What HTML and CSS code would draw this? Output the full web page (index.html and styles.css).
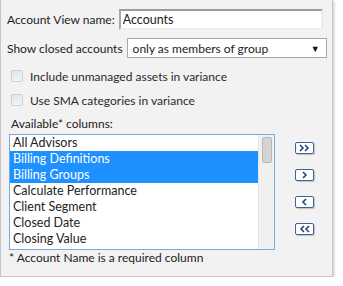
FILE: index.html
```html
<!DOCTYPE html>
<html lang="en">
  <head>
    <meta charset="UTF-8" />
    <title>Account View</title>
    <link rel="stylesheet" href="styles.css">
  </head>
  <body>
    <div class="panel">
      <div class="row name-row">
        <label for="view-name">Account View name:</label>
        <input id="view-name" class="text-input" type="text" value="Accounts" />
      </div>
      <div class="row closed-row">
        <label>Show closed accounts</label>
        <div class="select">
          <span>only as members of group</span>
          <span class="arrow">&#9660;</span>
        </div>
      </div>
      <div class="check"><span class="box"></span>Include unmanaged assets in variance</div>
      <div class="check"><span class="box"></span>Use SMA categories in variance</div>
      <div class="cols-label">Available* columns:</div>
      <div class="columns">
        <div class="list">
          <ul class="items">
            <li>All Advisors</li>
            <li class="selected">Billing Definitions</li>
            <li class="selected">Billing Groups</li>
            <li>Calculate Performance</li>
            <li>Client Segment</li>
            <li>Closed Date</li>
            <li>Closing Value</li>
          </ul>
          <div class="scrollbar"><div class="thumb"></div></div>
        </div>
        <div class="moves">
          <button class="move"><svg width="11" height="8" viewBox="0 0 11 8"><polyline points="1,1 4,4 1,7" /><polyline points="6,1 9,4 6,7" /></svg></button>
          <button class="move"><svg width="11" height="8" viewBox="0 0 11 8"><polyline points="4,1 7,4 4,7" /></svg></button>
          <button class="move"><svg width="11" height="8" viewBox="0 0 11 8"><polyline points="7,1 4,4 7,7" /></svg></button>
          <button class="move"><svg width="11" height="8" viewBox="0 0 11 8"><polyline points="5,1 2,4 5,7" /><polyline points="10,1 7,4 10,7" /></svg></button>
        </div>
      </div>
      <div class="note">* Account Name is a required column</div>
    </div>
  </body>
</html>
```

FILE: styles.css
```css
* {
  box-sizing: border-box;
}

body {
  margin: 0;
  background-color: #fff;
}

.panel {
  width: 333px;
  height: 277px;
  background-color: #f2f2f2;
  border: 1px solid #c6c6c6;
  border-top: none;
  box-shadow: 1px 1px 3px rgba(0, 0, 0, 0.22);
  padding: 9px 0 0 6px;
  font-family: 'Lato', sans-serif;
  font-size: 12px;
  color: #222;
}

.row {
  display: flex;
  align-items: center;
  white-space: nowrap;
}

.row label {
  flex-shrink: 0;
  margin-right: 4px;
}

.name-row {
  height: 21px;
}

.text-input {
  width: 204px;
  height: 21px;
  margin: 0;
  padding: 0 2px;
  font: inherit;
  font-size: 12.5px;
  color: #222;
  background-color: #fff;
  border-style: solid;
  border-width: 2px;
  border-color: #9c9c9c #ececec #ececec #a8a8a8;
  outline: none;
}

.closed-row {
  margin-top: 8px;
  height: 20px;
}

.select {
  display: flex;
  flex-shrink: 0;
  align-items: center;
  justify-content: space-between;
  width: 200px;
  height: 20px;
  padding: 0 6px 0 5px;
  background-color: #fff;
  border: 1px solid #a9a9a9;
}

.arrow {
  font-size: 9px;
  color: #111;
}

.check {
  display: flex;
  align-items: center;
  height: 24px;
  padding-left: 4px;
  color: #2a2a2a;
}

.closed-row + .check {
  margin-top: 6px;
}

.box {
  width: 12px;
  height: 12px;
  margin-right: 7px;
  border: 1px solid #cfcfcf;
  border-radius: 2px;
  background: linear-gradient(#e6e6e6, #f3f3f3);
}

.cols-label {
  margin-top: 4px;
  height: 16px;
  line-height: 16px;
  padding-left: 4px;
}

.columns {
  display: flex;
  margin-top: 2px;
  padding-left: 2px;
}

.list {
  display: flex;
  width: 266px;
  height: 116px;
  background-color: #fff;
  border: 1px solid #7ba7d9;
}

.items {
  flex: 1;
  list-style: none;
  margin: 0;
  padding: 0;
  font-size: 12.5px;
}

.items li {
  height: 16px;
  line-height: 16px;
  padding-left: 3px;
  white-space: nowrap;
}

.items li.selected {
  background-color: #1e90ff;
  color: #fff;
}

.scrollbar {
  width: 16px;
  padding: 2px 2px 0 3px;
  background-color: #f0f0f0;
  border-left: 1px solid #e4e4e4;
}

.thumb {
  height: 26px;
  background-color: #d4d4d4;
  border: 1px solid #b9b9b9;
  border-radius: 2px;
}

.moves {
  display: flex;
  flex-direction: column;
  gap: 15px;
  padding: 8px 0 0 20px;
}

.move {
  display: flex;
  align-items: center;
  justify-content: center;
  width: 19px;
  height: 12px;
  padding: 0;
  background-color: #fff;
  border: 1px solid #3b6394;
  border-radius: 2px;
  box-shadow: 1px 1px 1px rgba(0, 0, 0, 0.2);
}

.move svg polyline {
  fill: none;
  stroke: #1f4777;
  stroke-width: 1.6;
}

.note {
  height: 16px;
  line-height: 16px;
  padding-left: 2px;
}
```
